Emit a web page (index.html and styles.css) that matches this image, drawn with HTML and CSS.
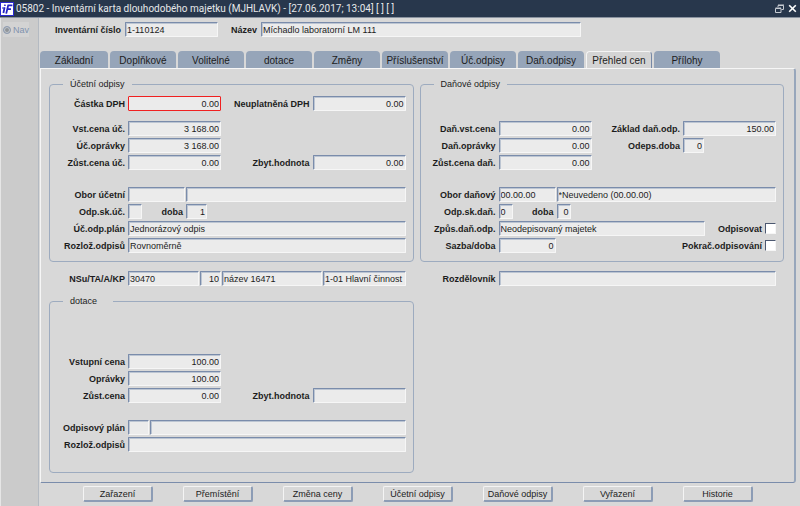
FILE: index.html
```html
<!DOCTYPE html>
<html lang="cs">
<head>
    <meta charset="UTF-8">
    <meta name="viewport" content="width=device-width, initial-scale=1.0">
    <title>Inventární karta dlouhodobého majetku</title>
    <link rel="stylesheet" href="styles.css">
</head>
<body>

    <header class="titlebar">
        <svg class="logo" viewBox="0 0 14 14">
            <rect x="0.5" y="0.5" width="13" height="13" fill="#fff" stroke="#2a2ad0"/>
            <path d="M4.6 5.4L3.4 11M5 2.6L4.8 3.8" fill="none" stroke="#2222c4" stroke-width="1.8"/>
            <path d="M6.2 11.6L8.2 3.4H12.4M7.4 7.2H11" fill="none" stroke="#2222c4" stroke-width="1.8"/>
            <path d="M2 6H5" stroke="#2222c4"/>
        </svg>
        <h1 class="caption">05802 - Inventární karta dlouhodobého majetku (MJHLAVK) - [27.06.2017; 13:04] [ ] [ ]</h1>
        <button class="win" type="button" aria-label="Obnovit">
            <svg viewBox="0 0 9 9" width="9" height="9" fill="none" stroke="#c6cbd2">
                <path d="M3 3V1.5H8.5V5.5H6.5M3 1h6"/>
                <path d="M0.5 4.5H6V8.5H0.5zM0.5 4h5.5"/>
            </svg>
        </button>
        <button class="win" type="button" aria-label="Zavřít">
            <svg viewBox="0 0 9 9" width="9" height="9" fill="none" stroke="#fff" stroke-width="1.6">
                <path d="M1.2 1.2L7.8 7.8M7.8 1.2L1.2 7.8"/>
            </svg>
        </button>
    </header>

    <div class="window">
        <aside class="side">
            <label class="nav"><input type="radio" name="nav" disabled> Nav</label>
        </aside>

        <main class="main">
            <div class="row head">
                <label class="lb" for="inv">Inventární číslo</label>
                <input class="w93" id="inv" type="text" value="1-110124">
                <label class="lb name" for="nazev">Název</label>
                <input class="w320" id="nazev" type="text" value="Míchadlo laboratorní LM 111">
            </div>

            <nav class="tabs">
                <button type="button">Základní</button>
                <button type="button">Doplňkové</button>
                <button type="button">Volitelné</button>
                <button type="button">dotace</button>
                <button type="button">Změny</button>
                <button type="button">Příslušenství</button>
                <button type="button">Úč.odpisy</button>
                <button type="button">Daň.odpisy</button>
                <button type="button" class="active">Přehled cen</button>
                <button type="button">Přílohy</button>
            </nav>

            <div class="panel">
                <div class="col">
                    <fieldset class="box">
                        <legend>Účetní odpisy</legend>
                        <div class="group">
                            <div class="row">
                                <label class="lb first" for="dph">Částka DPH</label>
                                <input class="w93 num current" id="dph" type="text" value="0.00">
                                <label class="lb push" for="ndph">Neuplatněná DPH</label>
                                <input class="w93 num" id="ndph" type="text" value="0.00">
                            </div>
                        </div>
                        <div class="group prices">
                            <div class="row">
                                <label class="lb first" for="vcu">Vst.cena úč.</label>
                                <input class="w93 num" id="vcu" type="text" value="3 168.00">
                            </div>
                            <div class="row">
                                <label class="lb first" for="uo">Úč.oprávky</label>
                                <input class="w93 num" id="uo" type="text" value="3 168.00">
                            </div>
                            <div class="row">
                                <label class="lb first" for="zcu">Zůst.cena úč.</label>
                                <input class="w93 num" id="zcu" type="text" value="0.00">
                                <label class="lb push" for="zh">Zbyt.hodnota</label>
                                <input class="w93 num" id="zh" type="text" value="0.00">
                            </div>
                        </div>
                        <div class="group plan">
                            <div class="row">
                                <label class="lb first" for="ou">Obor účetní</label>
                                <input class="w57" id="ou" type="text">
                                <input class="fill" type="text" aria-label="Obor účetní - název">
                            </div>
                            <div class="row">
                                <label class="lb first" for="osu">Odp.sk.úč.</label>
                                <input class="w14" id="osu" type="text">
                                <label class="lb doba" for="du">doba</label>
                                <input class="w21 num" id="du" type="text" value="1">
                            </div>
                            <div class="row">
                                <label class="lb first" for="uop">Úč.odp.plán</label>
                                <input class="fill" id="uop" type="text" value="Jednorázový odpis">
                            </div>
                            <div class="row">
                                <label class="lb first" for="ro">Rozlož.odpisů</label>
                                <input class="fill" id="ro" type="text" value="Rovnoměrně">
                            </div>
                        </div>
                    </fieldset>

                    <div class="row between">
                        <label class="lb first" for="nsu">NSu/TA/A/KP</label>
                        <input class="w71" id="nsu" type="text" value="30470">
                        <input class="w21 num" type="text" value="10" aria-label="TA">
                        <input class="w100" type="text" value="název 16471" aria-label="A">
                        <input class="fill" type="text" value="1-01 Hlavní činnost" aria-label="KP">
                    </div>

                    <fieldset class="box">
                        <legend>dotace</legend>
                        <div class="group grants">
                            <div class="row">
                                <label class="lb first" for="vc">Vstupní cena</label>
                                <input class="w93 num" id="vc" type="text" value="100.00">
                            </div>
                            <div class="row">
                                <label class="lb first" for="op">Oprávky</label>
                                <input class="w93 num" id="op" type="text" value="100.00">
                            </div>
                            <div class="row">
                                <label class="lb first" for="zc">Zůst.cena</label>
                                <input class="w93 num" id="zc" type="text" value="0.00">
                                <label class="lb push" for="zh2">Zbyt.hodnota</label>
                                <input class="w93 num" id="zh2" type="text">
                            </div>
                        </div>
                        <div class="group plan grants-plan">
                            <div class="row">
                                <label class="lb first" for="opl">Odpisový plán</label>
                                <input class="w21" id="opl" type="text">
                                <input class="fill" type="text" aria-label="Odpisový plán - název">
                            </div>
                            <div class="row">
                                <label class="lb first" for="ro2">Rozlož.odpisů</label>
                                <input class="fill" id="ro2" type="text">
                            </div>
                        </div>
                    </fieldset>
                </div>

                <div class="col">
                    <fieldset class="box">
                        <legend>Daňové odpisy</legend>
                        <div class="group tax">
                            <div class="row">
                                <label class="lb first" for="dvc">Daň.vst.cena</label>
                                <input class="w93 num" id="dvc" type="text" value="0.00">
                                <label class="lb push" for="zdo">Základ daň.odp.</label>
                                <input class="w93 num" id="zdo" type="text" value="150.00">
                            </div>
                            <div class="row">
                                <label class="lb first" for="dop">Daň.oprávky</label>
                                <input class="w93 num" id="dop" type="text" value="0.00">
                                <label class="lb push" for="od">Odeps.doba</label>
                                <div class="slot">
                                    <input class="w21 num" id="od" type="text" value="0">
                                </div>
                            </div>
                            <div class="row">
                                <label class="lb first" for="zcd">Zůst.cena daň.</label>
                                <input class="w93 num" id="zcd" type="text" value="0.00">
                            </div>
                        </div>
                        <div class="group plan">
                            <div class="row">
                                <label class="lb first" for="obd">Obor daňový</label>
                                <input class="w57" id="obd" type="text" value="00.00.00">
                                <input class="fill" type="text" value="*Neuvedeno (00.00.00)" aria-label="Obor daňový - název">
                            </div>
                            <div class="row">
                                <label class="lb first" for="osd">Odp.sk.daň.</label>
                                <input class="w14" id="osd" type="text" value="0">
                                <label class="lb doba" for="dd">doba</label>
                                <input class="w14 num" id="dd" type="text" value="0">
                            </div>
                            <div class="row">
                                <label class="lb first" for="zdop">Způs.daň.odp.</label>
                                <input class="w206" id="zdop" type="text" value="Neodepisovaný majetek">
                                <label class="lb push" for="odp">Odpisovat</label>
                                <input class="check" id="odp" type="checkbox">
                            </div>
                            <div class="row">
                                <label class="lb first" for="sd">Sazba/doba</label>
                                <input class="w57 num" id="sd" type="text" value="0">
                                <label class="lb push" for="pok">Pokrač.odpisování</label>
                                <input class="check" id="pok" type="checkbox">
                            </div>
                        </div>
                    </fieldset>

                    <div class="row between">
                        <label class="lb first" for="roz">Rozdělovník</label>
                        <input class="fill" id="roz" type="text">
                    </div>
                </div>
            </div>

            <footer class="actions">
                <button type="button">Zařazení</button>
                <button type="button">Přemístění</button>
                <button type="button">Změna ceny</button>
                <button type="button">Účetní odpisy</button>
                <button type="button">Daňové odpisy</button>
                <button type="button">Vyřazení</button>
                <button type="button">Historie</button>
            </footer>
        </main>
    </div>

</body>
</html>
```
FILE: styles.css
```css
*{
    box-sizing: border-box;
}
body{
    margin: 0;
    min-height: 100vh;
    display: flex;
    flex-direction: column;
    background-color: #d8d8d8;
    color: #1c1c1c;
    font-family: "Liberation Sans", Arial, sans-serif;
    font-size: 9px;
    line-height: 12px;
}
button, input{
    font: inherit;
    color: inherit;
    margin: 0;
}

/* title bar */
.titlebar{
    display: flex;
    align-items: center;
    height: 18px;
    padding-right: 1px;
    background-color: #28374c;
    border-bottom: 1px solid #8a93a0;
}
.logo{
    width: 14px;
    height: 14px;
}
.caption{
    flex: 1;
    margin: 0 0 0 2px;
    font-family: Roboto, "Liberation Sans", sans-serif;
    font-size: 10px;
    font-weight: normal;
    color: #e6e8ea;
}
.win{
    display: flex;
    padding: 0 2px;
    border: 0;
    background: none;
}

.window{
    flex: 1;
    display: flex;
}
.side{
    width: 39px;
    padding: 4px 0 0 2px;
    background-color: #cbcbcb;
    border-left: 1px solid #e6e6e6;
    border-right: 1px solid #b4bac2;
}
.nav{
    display: flex;
    align-items: center;
    gap: 2px;
    width: 26px;
    height: 15px;
    background-color: #d3d3d3;
    color: #8092ae;
}
.nav input{
    appearance: none;
    flex: none;
    width: 8px;
    height: 8px;
    border: 1px solid #8f9db3;
    border-radius: 50%;
    background-color: #8f9499;
    box-shadow: inset 0 0 0 1px #c4c8cc;
}
.main{
    flex: 1;
    display: flex;
    flex-direction: column;
    padding: 4px 4px 4px 1px;
}

/* rows and fields */
.row{
    display: flex;
    align-items: center;
    gap: 1px;
    height: 15px;
}
.lb{
    padding-right: 2px;
    font-weight: bold;
    white-space: nowrap;
}
.first{
    width: 77px;
    text-align: right;
}
.push{
    margin-left: auto;
}
.doba{
    width: 42px;
    text-align: right;
}
input[type="text"]{
    height: 15px;
    min-width: 0;
    padding: 0 1px;
    border: 1px solid #f6f6f6;
    border-top-color: #7a8cab;
    border-left-color: #7a8cab;
    border-radius: 1px;
    background-color: #ebebeb;
    box-shadow: inset 1px 1px #bcc5d2;
}
input.num{
    text-align: right;
}
input.current{
    border: 1px solid #f02020;
    box-shadow: none;
}
.fill{
    flex: 1;
}
.w14{
    width: 14px;
}
.w21{
    width: 21px;
}
.w57{
    width: 57px;
}
.w71{
    width: 71px;
}
.w93, .slot{
    width: 93px;
}
.w100{
    width: 100px;
}
.w206{
    width: 206px;
}
.w320{
    width: 320px;
}
.slot{
    display: flex;
}
.check{
    appearance: none;
    width: 11px;
    height: 11px;
    border: 1px solid #f6f6f6;
    border-top-color: #4c5870;
    border-left-color: #4c5870;
    background-color: #fff;
}
.head{
    gap: 2px;
    padding-left: 15px;
}
.name{
    margin-left: 11px;
}

/* tabs */
.tabs{
    display: flex;
    gap: 2px;
    margin-top: 14px;
}
.tabs button{
    width: 66px;
    height: 17px;
    padding: 2px 0 0;
    border: 0;
    border-radius: 4px 4px 0 0;
    background-color: #96a5b9;
    font-size: 10px;
    white-space: nowrap;
}
.tabs button:first-child{
    width: 68px;
}
.tabs .active{
    margin-bottom: -1px;
    height: 18px;
    padding: 0;
    border: 1px solid #f4f4f4;
    border-right-color: #7688a6;
    border-bottom: 0;
    background-color: #d4d4d4;
}
.panel{
    flex: 1;
    display: grid;
    grid-template-columns: 1fr 1fr;
    gap: 6px;
    padding: 9px 10px 8px 8px;
    border: 1px solid #f6f6f6;
    border-right: 2px solid #97a6bb;
    border-bottom-color: #7a8cab;
    border-radius: 0 3px 3px 0;
}
.col{
    min-width: 0;
}
.box{
    min-width: 0;
    margin: 0;
    padding: 6px 7px 8px 0;
    border: 1px solid #9dabbf;
    border-radius: 4px;
}
.box legend{
    min-width: 50px;
    margin-left: 13px;
    padding: 0 7px;
}
.group{
    display: flex;
    flex-direction: column;
    gap: 2px;
}
.prices{
    margin-top: 10px;
}
.tax{
    margin-top: 25px;
}
.plan{
    margin-top: 17px;
}
.grants{
    margin-top: 41px;
}
.grants-plan{
    margin-bottom: 12px;
}
.between{
    margin: 9px 0;
    padding: 0 8px 0 1px;
}

.actions{
    display: flex;
    gap: 30px;
    margin-top: 3px;
    padding-left: 43px;
}
.actions button{
    width: 70px;
    height: 16px;
    padding: 0;
    border: 1px solid #f4f4f4;
    border-right: 2px solid #8c9cb5;
    border-bottom: 2px solid #8c9cb5;
    border-radius: 2px;
    background-color: #d8d8d8;
}
```
